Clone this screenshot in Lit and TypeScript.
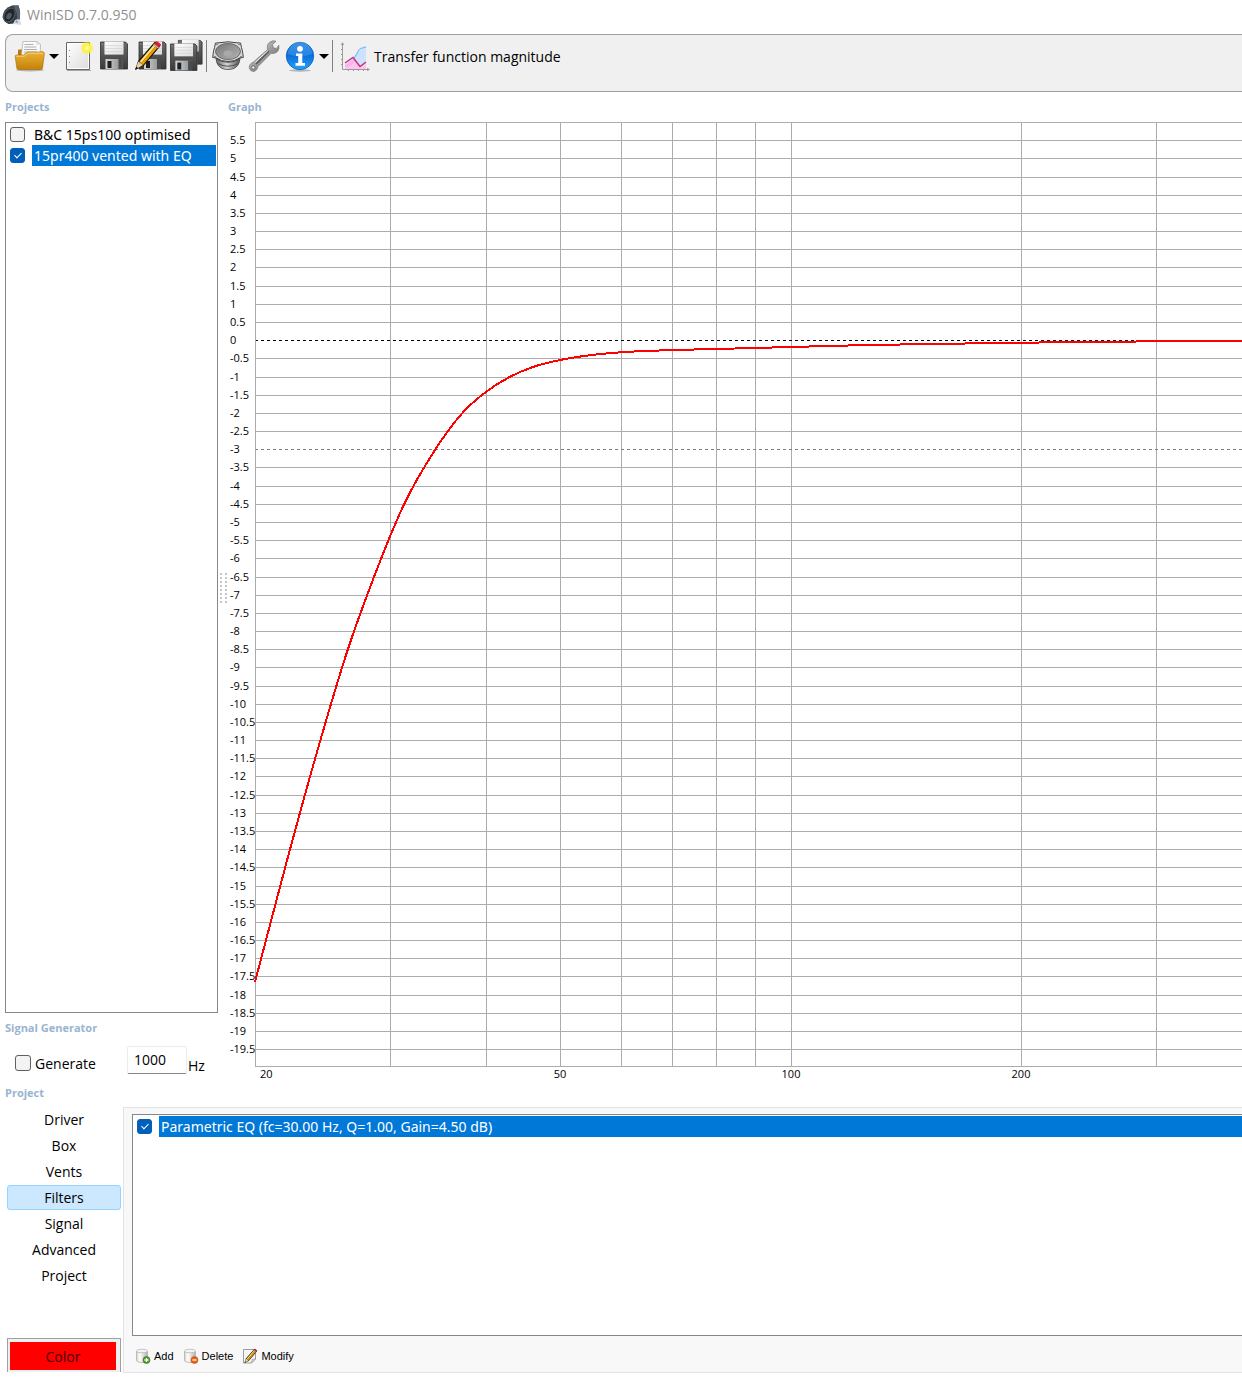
import { LitElement, html, svg, css } from "lit";
import { customElement, state } from "lit/decorators.js";

const DB_TOP = 6;
const DB_BOTTOM = -20;
const DB_STEP = 36.36;
const PLOT_HEIGHT = 944;
const PLOT_LEFT = 27;
const DECADE = 766.2;
const CHART_HEIGHT = 961;

const freqX = (hz: number) => PLOT_LEFT + Math.round(DECADE * Math.log10(hz / 20));
const dbY = (db: number) => Math.min(PLOT_HEIGHT, Math.round((DB_TOP - db) * DB_STEP));

/* Response curve samples, measured from the plot's top left corner. */
const RESPONSE: [number, number][] = [
  [0, 860], [30, 746], [60, 637], [93, 527], [119, 455], [149, 382.5], [180, 328], [206.500, 292],
  [231.500, 269.500], [255, 254.800], [278.500, 244.800], [305, 238], [333, 233.500], [366, 230.300],
  [417, 228.100], [461, 227], [536, 225], [615, 223], [690, 221.800],
  [775, 220.600], [830, 220], [892, 219.400], [1100, 219], [2600, 219],
];

function curvePath(points: [number, number][]): string {
  const slope = (i: number) => (points[i + 1][1] - points[i][1]) / (points[i + 1][0] - points[i][0]);
  const tangent = (i: number) => {
    if (i === 0) return slope(0);
    if (i === points.length - 1) return slope(i - 1);
    const before = points[i][0] - points[i - 1][0];
    const after = points[i + 1][0] - points[i][0];
    return (slope(i - 1) * after + slope(i) * before) / (before + after);
  };
  let d = `M${points[0][0]} ${points[0][1]}`;
  for (let i = 0; i < points.length - 1; i++) {
    const [x1, y1] = points[i];
    const [x2, y2] = points[i + 1];
    const third = (x2 - x1) / 3;
    d += `C${(x1 + third).toFixed(1)} ${(y1 + third * tangent(i)).toFixed(1)} ${(x2 - third).toFixed(1)} ${(y2 - third * tangent(i + 1)).toFixed(1)} ${x2} ${y2}`;
  }
  return d;
}

const disk = (transform: string) => svg`
  <g transform=${transform}>
    <path d="M1 1h25l2 2v25H1z" fill="url(#disk)" stroke="#2c2c2c" stroke-width=".8"/>
    <path d="M5 .6h19v13H5z" fill="url(#paper)"/>
    <path d="M5 4.500h19M5 7.500h19M5 10.500h19" stroke="#d2d2d2" stroke-width=".7"/>
    <path d="M6 18h17v10H6z" fill="url(#steel)"/>
    <path d="M8 20h4v7H8z" fill="#1d1f22"/>
    <path d="M19 18h4v10h-4z" fill="#4a4a4a"/>
    <path d="M1.500 2h2v2h-2z" fill="#777"/>
  </g>`;

const pencil = svg`
  <path d="M1 30l3-9L21 1.500l5.500 4.500L9.500 26z" fill="#1a1400"/>
  <path d="M5.500 21.500L19.500 5l1.800 1.400L7.200 23.200z" fill="#ffe27a"/>
  <path d="M7.200 23.200L21.300 6.400l1.900 1.600L9 25z" fill="#f0a000"/>
  <path d="M19.800 4.300l3-3.300 4.400 3.600-2.900 3.700z" fill="#d8202a"/>
  <path d="M19.200 4.800l1-1.100 4.500 3.700-1 1.200z" fill="#b9bcc0"/>
  <path d="M1 30l3.400-8.600L9 25z" fill="#ecd0a0"/>
  <path d="M1 30l1.300-3.400 2 1.600z" fill="#111"/>`;

const defs = svg`
  <defs>
    <linearGradient id="disk" x1="0" y1="0" x2="0" y2="1"><stop offset="0" stop-color="#6b6b6b"/><stop offset="1" stop-color="#3a3a3a"/></linearGradient>
    <linearGradient id="paper" x1="0" y1="0" x2="1" y2="1"><stop offset="0" stop-color="#fff"/><stop offset="1" stop-color="#dcdcdc"/></linearGradient>
    <linearGradient id="steel" x1="0" y1="0" x2="1" y2="0"><stop offset="0" stop-color="#d4d6d8"/><stop offset=".6" stop-color="#a5a8ab"/><stop offset="1" stop-color="#888"/></linearGradient>
    <linearGradient id="gold" x1="0" y1="0" x2="0" y2="1"><stop offset="0" stop-color="#ebb13a"/><stop offset="1" stop-color="#c48205"/></linearGradient>
    <radialGradient id="sun"><stop offset="0" stop-color="#fffde0"/><stop offset=".45" stop-color="#fff23a"/><stop offset=".7" stop-color="#fff23a" stop-opacity=".75"/><stop offset="1" stop-color="#fff23a" stop-opacity="0"/></radialGradient>
    <linearGradient id="cone" x1="0" y1="0" x2="1" y2="1"><stop offset="0" stop-color="#777"/><stop offset="1" stop-color="#b4b4b4"/></linearGradient>
    <linearGradient id="basket" x1="0" y1="0" x2="1" y2="0"><stop offset="0" stop-color="#5a5a5a"/><stop offset=".45" stop-color="#d6d6d6"/><stop offset="1" stop-color="#4a4a4a"/></linearGradient>
    <linearGradient id="wrench" x1="0" y1="0" x2="1" y2="1"><stop offset="0" stop-color="#f2f2f2"/><stop offset=".5" stop-color="#9a9a9a"/><stop offset="1" stop-color="#5d5d5d"/></linearGradient>
    <linearGradient id="info" x1="0" y1="0" x2="0" y2="1"><stop offset="0" stop-color="#1c86e6"/><stop offset=".5" stop-color="#0a6fdc"/><stop offset="1" stop-color="#27a6fb"/></linearGradient>
    <linearGradient id="cyl" x1="0" y1="0" x2="1" y2="0"><stop offset="0" stop-color="#d2d2d2"/><stop offset=".3" stop-color="#fff"/><stop offset=".6" stop-color="#dedede"/><stop offset="1" stop-color="#b2b2b2"/></linearGradient>
  </defs>`;

const icon = (body: unknown, size = 32) => html`
  <svg class="icon" width=${size} height=${size} viewBox="0 0 ${size} ${size}" aria-hidden="true">${defs}${body}</svg>`;

const ICONS = {
  open: svg`
    <ellipse cx="16" cy="30" rx="14" ry="1.500" fill="#000" opacity=".25"/>
    <path d="M4 29L4 10.500q0-1 1-1h6l2 2h15q2 0 2 2l-2 15z" fill="#b87a10"/>
    <path d="M7 18L9 1.500l14 0 3.500 3L26 18z" fill="#fafafa" stroke="#a9a9a9" stroke-width=".7"/>
    <path d="M10.500 4.500h9M10.200 7h12M10 9.500h13M9.700 12h13" stroke="#a5a5a5" stroke-width=".9"/>
    <path d="M22 1.500l.5 3.500 4-.5z" fill="#ddd"/>
    <path d="M1.200 16.500q-.2-1.500 1.300-1.500h7l4-3h15.500q1.500 0 1.400 1.500L28.500 28q-.2 1.500-1.700 1.500H4.500Q3 29.500 2.800 28z" fill="url(#gold)" stroke="#a36c08" stroke-width=".6"/>
    <path d="M2.200 16.200h8l4-3h15" fill="none" stroke="#f9d680" stroke-width=".9"/>`,
  create: svg`
    <path d="M5 30.500h24" stroke="#000" stroke-opacity=".3"/>
    <path d="M4.500 2.500h23v27h-23z" fill="url(#paper)" stroke="#666"/>
    <path d="M5.500 3.500h21v25h-21z" fill="none" stroke="#fff"/>
    <path d="M7 10h1v1H7zM7 16h1v1H7zM7 22h1v1H7z" fill="#888"/>
    <circle cx="25" cy="8" r="7" fill="url(#sun)"/>`,
  save: disk("translate(1.500 1)"),
  saveAs: svg`${disk("translate(4 1)")}${pencil}`,
  saveAll: svg`${disk("translate(7.500 -.5) scale(.88)")}${disk("translate(-.5 3) scale(.98)")}`,
  speaker: svg`
    <path d="M3 14l2 9q2.500 6.500 11 6.500T27 23l2-9z" fill="url(#basket)" stroke="#444" stroke-width=".8"/>
    <path d="M4.500 19q11.500 6.500 23 0M5.500 23.500q10.500 5.500 21 0" fill="none" stroke="#555" stroke-width="1.200"/>
    <path d="M3.500 3l4.500-.3q8-1.800 16 0l4.500.3 1 4.500q1 3 1.300 6l.5 4-4 .5q-4 3.500-11.300 3.500T4.700 18l-4-.5.5-4q.3-3 1.300-6z" fill="#dadada" stroke="#444" stroke-width="1"/>
    <ellipse cx="16" cy="11.500" rx="12.500" ry="8" fill="url(#cone)" stroke="#6a6a6a"/>
    <ellipse cx="16" cy="13.500" rx="4.500" ry="3" fill="#a9a9a9"/>
    <path d="M4.500 4h1v1h-1zM26.500 4h1v1h-1zM2.500 16h1v1h-1zM28.500 16h1v1h-1z" fill="#333"/>`,
  wrench: svg`
    <path d="M1.500 25.500q1-2.500 4-3.500L19.500 9.500Q18.500 4 22 2q3-2 6-.8L24.500 4.500l.8 3.300 3.200.7 2.300-3.300q1 4-1.600 6.600-2.400 2.300-6 1.500L10 26.500q-.4 3.500-3.200 4.700Q3.500 32 2 29.700q-1.200-2-.5-4.200z" fill="url(#wrench)" stroke="#777" stroke-width=".7"/>
    <path d="M8 24L21 11" stroke="#555" stroke-width="1.600"/>
    <path d="M7.200 22.500L19.800 10.700" stroke="#fff" stroke-width=".9"/>
    <circle cx="5.300" cy="27.500" r="1.700" fill="#efefef" stroke="#555" stroke-width=".8"/>`,
  info: svg`
    <ellipse cx="16" cy="30.500" rx="11" ry="1.200" fill="#000" opacity=".25"/>
    <circle cx="16" cy="16" r="13.700" fill="url(#info)" stroke="#0b5cc0" stroke-width=".8"/>
    <path d="M4 14a12 12 0 0 1 24 0q-12 5-24 0z" fill="#fff" opacity=".13"/>
    <circle cx="16" cy="8.800" r="2.900" fill="#fff"/>
    <path d="M12 13.500h6.300v9.500H21v2.700h-9.500V23h2.700v-7H12z" fill="#fff"/>`,
  graph: svg`
    <path d="M5 25l9-7 6 8.500 6-4V29H5z" fill="#f9b4ee"/>
    <path d="M5 27q7-1 10-5l5 5 6-4v6H5z" fill="#ffc4ee"/>
    <path d="M14 18q4-8 6-8.500l6-1V23l-6 3.500z" fill="#cfe2fd"/>
    <path d="M14 18q2-2 3.500-5.500t3-4l5.500-1.500" fill="none" stroke="#86bcfb" stroke-width="1.300"/>
    <path d="M5 23l8-5.500 7 9 6-4.500" fill="none" stroke="#b83276" stroke-width="1.300"/>
    <path d="M2.500 4v25.500H28" fill="none" stroke="#9b9b9b"/>
    <path d="M.8 5L2.500 2l1.700 3zM27 27.800l3 1.700-3 1.700z" fill="#9b9b9b"/>
    <path d="M1 9.500h2M1 14.500h2M1 19.500h2M1 24.500h2M8.500 29v2M13.500 29v2M18.500 29v2M23.500 29v2" stroke="#9b9b9b"/>`,
};

const cylinder = svg`
  <path d="M1.500 3v9.500q0 2 5.500 2t5.500-2V3z" fill="url(#cyl)" stroke="#a8a8a8" stroke-width=".7"/>
  <ellipse cx="7" cy="3" rx="5.500" ry="1.800" fill="#f4f4f4" stroke="#b0b0b0" stroke-width=".7"/>`;

const SMALL = {
  add: svg`${cylinder}
    <circle cx="11.500" cy="12" r="3.500" fill="#4d9a2a" stroke="#2f7514" stroke-width=".6"/>
    <path d="M9.500 12h4M11.500 10v4" stroke="#fff" stroke-width="1.300"/>`,
  remove: svg`${cylinder}
    <circle cx="11.500" cy="12" r="3.500" fill="#ea6218" stroke="#c04a08" stroke-width=".6"/>
    <path d="M9.500 12h4" stroke="#fff" stroke-width="1.300"/>`,
  modify: svg`
    <path d="M1.500 1.500h12v9.500l-4 4h-8z" fill="#f7f7f7" stroke="#9c9c9c"/>
    <path d="M9.500 15l.5-3.500 3.500-.5z" fill="#ddd" stroke="#9c9c9c" stroke-width=".7"/>
    <g transform="translate(2 .3) scale(.49)">${pencil}</g>`,
};

@customElement("app-root")
export class AppRoot extends LitElement {
  @state() private tab = "Filters";
  @state() private selected = 1;

  private projects = [
    { name: "B&C 15ps100 optimised", shown: false },
    { name: "15pr400 vented with EQ", shown: true },
  ];
  private tabs = ["Driver", "Box", "Vents", "Filters", "Signal", "Advanced", "Project"];

  static styles = css`
    :host { display: block; min-height: 100vh; overflow: hidden; background: #fff; color: #000;
      font: 14px/20px "Open Sans", "Noto Sans", sans-serif; }
    * { box-sizing: border-box; }
    button, input { font: inherit; color: inherit; margin: 0; }
    button { border: 0; background: none; padding: 0; }
    .title { display: flex; align-items: center; gap: 5px; height: 30px; margin: 0 0 4px; padding-left: 2px;
      font-size: 14px; font-weight: 400; color: #8f8f8f; }
    .toolbar { display: flex; align-items: flex-start; height: 58px; margin-left: 5px; padding: 3px 6px;
      background: #f0f0f0; border: 1px solid #a0a0a0; border-right: 0; border-radius: 8px 0 0 8px; }
    .tool { display: flex; align-items: center; justify-content: center; width: 36px; height: 36px; }
    .tool.wide { width: auto; padding: 0 4px; gap: 2px; white-space: nowrap; }
    .tool span { padding-top: 2px; }
    .drop { display: flex; align-items: center; justify-content: center; width: 12px; height: 36px; }
    .drop::before { content: ""; border: 5px solid transparent; border-top-color: #000; border-bottom: 0; }
    .sep { width: 6px; height: 32px; margin-top: 2px; background: linear-gradient(#808080, #808080) 2px 0 / 1px 100% no-repeat; }
    .icon { display: block; flex: none; overflow: visible; }
    .work { display: flex; }
    .side { display: flex; flex-direction: column; flex: none; width: 218px; padding-left: 5px; }
    .heading { margin: 0; font-size: 11px; font-weight: 700; line-height: 30px; color: #99b4d1; }
    .list { margin: 0; padding: 1px; list-style: none; border: 1px solid #828790; background: #fff; }
    .side .list { flex: 1; }
    .row { display: flex; align-items: center; height: 21px; padding-left: 3px; gap: 7px; }
    .name { flex: 1; align-self: stretch; padding-left: 2px; white-space: nowrap;
      font: 14px/21px "Noto Sans", "Open Sans", sans-serif; }
    .row.on .name { background: #0078d7; color: #fff; }
    .check { appearance: none; flex: none; display: grid; place-items: center; width: 15px; height: 15px;
      border: 1px solid #5f5f5f; border-radius: 3px; background: #f3f3f3; }
    .check:checked { border-color: #005fb8; background: #005fb8; }
    .check:checked::after { content: ""; width: 3px; height: 6px; margin-bottom: 2px;
      border: solid #fff; border-width: 0 1px 1px 0; transform: rotate(45deg); }
    .signal { display: flex; align-items: center; height: 40px; padding-left: 10px; }
    .generate { display: flex; align-items: center; gap: 4px; width: 112px; }
    .generate span { padding-top: 2px; }
    .generate .check { width: 16px; height: 16px; }
    .hertz { width: 60px; height: 28px; margin-bottom: 6px; padding: 0 0 2px 6px; border: 1px solid #ececec;
      border-bottom-color: #868686; border-radius: 2px; background: #fff; outline: 0; }
    .unit { padding: 6px 0 0 1px; }
    .splitter { flex: none; align-self: center; width: 10px; height: 30px; padding: 0 3px 0 2px; }
    .splitter svg { display: block; }
    .graph { flex: 1; min-width: 0; }
    .chart { display: block; width: 100%; height: 961px; overflow: hidden; font-size: 11px; }
    .grid { stroke: #acacac; stroke-width: 1; shape-rendering: crispEdges; }
    .zero { stroke: #000; stroke-dasharray: 3 3; shape-rendering: crispEdges; }
    .minus3 { stroke: #808080; stroke-dasharray: 3 3; shape-rendering: crispEdges; }
    .curve { fill: none; stroke: #f00; stroke-width: 2; shape-rendering: crispEdges; }
    .heading.low { padding-left: 5px; margin-bottom: 4px; line-height: 20px; }
    .project { display: flex; gap: 2px; }
    .tabs { display: flex; flex-direction: column; flex: none; gap: 1px; width: 121px; padding: 0 0 1px 7px; }
    .tab { height: 25px; padding-top: 1px; border: 1px solid transparent; border-radius: 3px; line-height: 22px; text-align: center; }
    .tab.on { border-color: #99d1ff; background: #cce8ff; }
    .color { height: 34px; margin-top: auto; padding: 3px 4px 2px 2px; border: 1px solid #a0a0a0; border-bottom: 0; background: #f0f0f0; }
    .swatch { display: block; padding-top: 2px; background: #f00; color: #400; line-height: 26px; }
    .panel { flex: 1; min-width: 0; padding: 6px 0 0 8px; border: 1px solid #e3e3e3; border-right: 0; background: #f8f8f8; }
    .panel .list { height: 222px; border-right: 0; padding-right: 0; }
    .actions { display: flex; align-items: center; gap: 9px; height: 36px; padding: 4px 0 0 3px;
      font: 11px/16px "Liberation Sans", Arial, sans-serif; }
    .action { display: flex; align-items: center; gap: 3px; }
  `;

  private chart() {
    const dbs: number[] = [];
    for (let db = 5.5; db >= -19.5; db -= 0.5) dbs.push(db);
    const freqs = [30, 40, 50, 60, 70, 80, 90, 100, 200, 300, 400, 500];
    return html`
      <svg class="chart" height=${CHART_HEIGHT} role="img" aria-label="Transfer function magnitude">
        ${freqs.map((f) => svg`<line class="grid" x1=${freqX(f) + 0.5} x2=${freqX(f) + 0.5} y1="0" y2=${PLOT_HEIGHT}></line>`)}
        ${[DB_TOP, ...dbs, DB_BOTTOM].map((db) => {
          const y = dbY(db) + 0.5;
          const kind = db === 0 ? "zero" : db === -3 ? "minus3" : "grid";
          return svg`<line class=${kind} x1=${PLOT_LEFT} x2="100%" y1=${y} y2=${y}></line>`;
        })}
        <line class="grid" x1=${PLOT_LEFT + 0.5} x2=${PLOT_LEFT + 0.5} y1="0" y2=${PLOT_HEIGHT}></line>
        <path class="curve" transform="translate(${PLOT_LEFT} 0)" d=${curvePath(RESPONSE)}></path>
        ${dbs.map((db) => svg`<text x="2" y=${dbY(db) + 4}>${db}</text>`)}
        <text x="32" y="956">20</text>
        ${[50, 100, 200].map((f) => svg`<text x=${freqX(f)} y="956" text-anchor="middle">${f}</text>`)}
      </svg>`;
  }

  render() {
    return html`
      <h1 class="title">
        <svg class="icon" width="20" height="20" viewBox="0 0 20 20" aria-hidden="true">
          <path d="M.5 12Q1.500 3 10 .500l6.500 0q2.500 7 1 14l-5 4-6 .5q-5-2-6-7z" fill="#343b42"/>
          <path d="M11 .500l5.500 0q2.500 7 1 14l-3 2q2-8-3.500-16z" fill="#56616b"/>
          <ellipse cx="7.500" cy="10" rx="5" ry="7.500" transform="rotate(30 7.500 10)" fill="#20262b" stroke="#5e6870" stroke-width=".8"/>
          <ellipse cx="7" cy="11" rx="2.300" ry="3.500" transform="rotate(30 7 11)" fill="#515c66"/>
          <path d="M11 19l2-4 3-1 3 3v3z" fill="#d9dde0"/>
          <path d="M13 17l2-2 1 3z" fill="#8b949b"/>
        </svg>
        <span>WinISD 0.7.0.950</span>
      </h1>
      <div class="toolbar" role="toolbar">
        <button class="tool" aria-label="Open">${icon(ICONS.open)}</button>
        <button class="drop" aria-label="Recent files"></button>
        <button class="tool" aria-label="New">${icon(ICONS.create)}</button>
        <button class="tool" aria-label="Save">${icon(ICONS.save)}</button>
        <button class="tool" aria-label="Save as">${icon(ICONS.saveAs)}</button>
        <button class="tool" aria-label="Save all">${icon(ICONS.saveAll)}</button>
        <span class="sep"></span>
        <button class="tool" aria-label="Drivers">${icon(ICONS.speaker)}</button>
        <button class="tool" aria-label="Options">${icon(ICONS.wrench)}</button>
        <button class="tool" aria-label="About">${icon(ICONS.info)}</button>
        <button class="drop" aria-label="Help menu"></button>
        <span class="sep"></span>
        <button class="tool wide">${icon(ICONS.graph)}<span>Transfer function magnitude</span></button>
      </div>
      <div class="work">
        <section class="side">
          <h2 class="heading">Projects</h2>
          <ul class="list">
            ${this.projects.map((p, i) => html`
              <li class="row ${i === this.selected ? "on" : ""}" @click=${() => (this.selected = i)}>
                <input class="check" type="checkbox" id="project-${i}" .checked=${p.shown}>
                <label class="name" for="project-${i}">${p.name}</label>
              </li>`)}
          </ul>
          <h2 class="heading">Signal Generator</h2>
          <div class="signal">
            <label class="generate"><input class="check" type="checkbox"><span>Generate</span></label>
            <input class="hertz" id="hertz" type="text" value="1000">
            <label class="unit" for="hertz">Hz</label>
          </div>
        </section>
        <div class="splitter" role="separator">
          <svg width="7" height="30" fill="#c6c6c6" aria-hidden="true">
            ${[0, 4, 8, 12, 16, 20, 24, 28].map((y) => svg`<path d="M0 ${y}h2v2H0zM5 ${y}h2v2H5z"/>`)}
          </svg>
        </div>
        <section class="graph">
          <h2 class="heading">Graph</h2>
          ${this.chart()}
        </section>
      </div>
      <h2 class="heading low">Project</h2>
      <div class="project">
        <nav class="tabs">
          ${this.tabs.map((t) => html`
            <button class="tab ${t === this.tab ? "on" : ""}" @click=${() => (this.tab = t)}>${t}</button>`)}
          <button class="color"><span class="swatch">Color</span></button>
        </nav>
        <section class="panel">
          <ul class="list">
            <li class="row on">
              <input class="check" type="checkbox" id="filter" checked>
              <label class="name" for="filter">Parametric EQ (fc=30.00 Hz, Q=1.00, Gain=4.50 dB)</label>
            </li>
          </ul>
          <div class="actions">
            <button class="action">${icon(SMALL.add, 16)}Add</button>
            <button class="action">${icon(SMALL.remove, 16)}Delete</button>
            <button class="action">${icon(SMALL.modify, 16)}Modify</button>
          </div>
        </section>
      </div>`;
  }
}
